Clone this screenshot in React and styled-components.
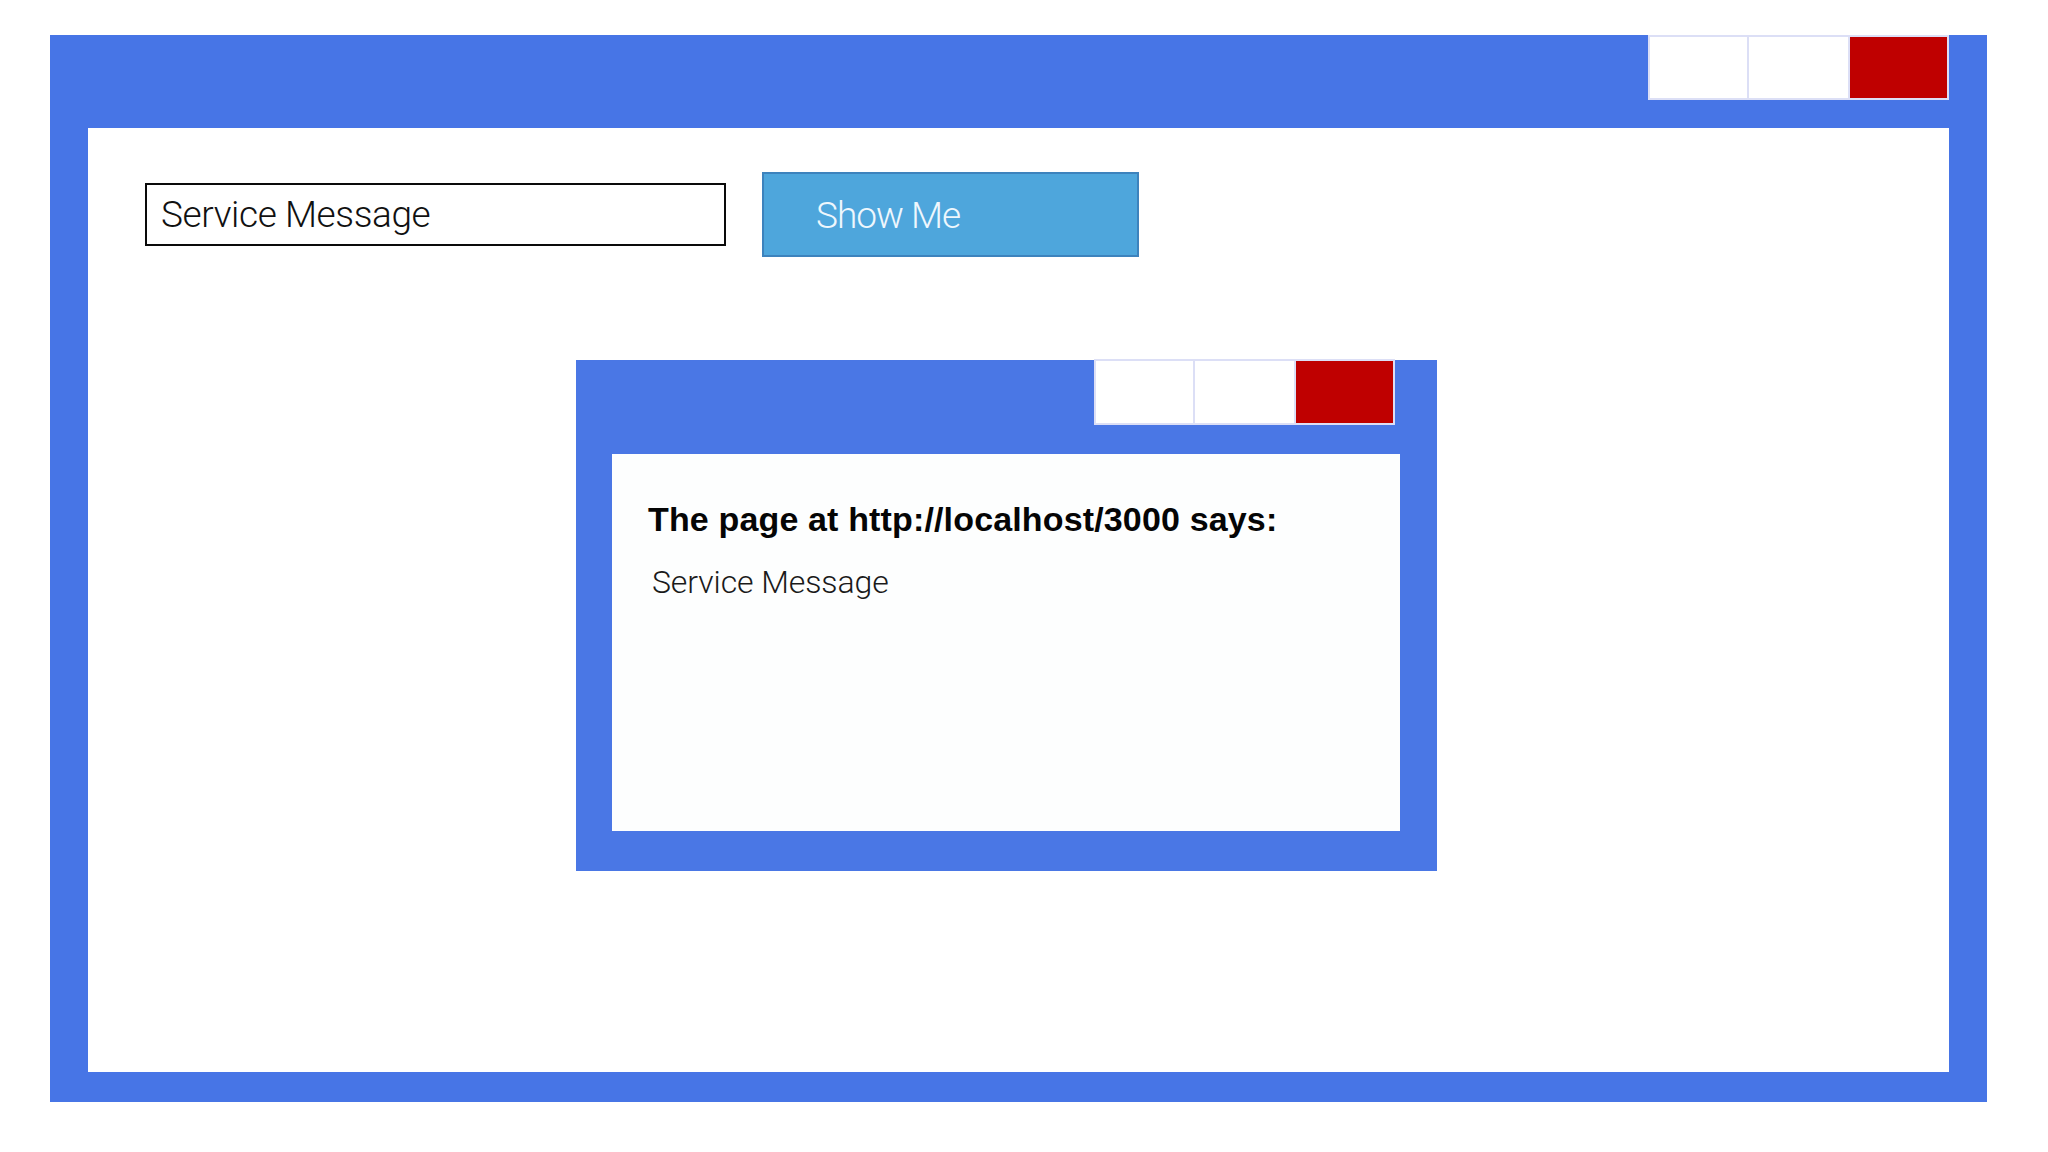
import React from "react";
import styled, { createGlobalStyle } from "styled-components";

const GlobalStyle = createGlobalStyle`
  html, body {
    margin: 0;
    padding: 0;
    background: #ffffff;
  }
  body {
    font-family: Roboto, "Liberation Sans", sans-serif;
  }
`;

const Page = styled.div`
  width: 2048px;
  height: 1152px;
  box-sizing: border-box;
  padding: 35px 61px 50px 50px;
  background: #ffffff;
`;

const Window = styled.div`
  display: flex;
  flex-direction: column;
  box-sizing: border-box;
  width: ${(p) => p.$width}px;
  height: ${(p) => p.$height}px;
  padding: 0 ${(p) => p.$side}px ${(p) => p.$bottom}px ${(p) => p.$left || p.$side}px;
  background: ${(p) => p.$color};
`;

const TitleBar = styled.div`
  display: flex;
  justify-content: flex-end;
  align-items: flex-start;
  flex: 0 0 ${(p) => p.$height}px;
  margin-right: ${(p) => p.$inset || 0}px;
`;

const Controls = styled.div`
  display: flex;
  margin-top: ${(p) => p.$offset || 0}px;
`;

const Control = styled.div`
  box-sizing: border-box;
  width: ${(p) => p.$w || 101}px;
  height: ${(p) => p.$h || 65}px;
  border: 2px solid #dcdff6;
  background: ${(p) => (p.$close ? "#bf0000" : "#ffffff")};
  & + & {
    margin-left: -2px;
  }
`;

const WindowBody = styled.div`
  flex: 1;
  background: ${(p) => p.$bg || "#ffffff"};
  box-sizing: border-box;
`;

const MainBody = styled(WindowBody)`
  padding: 44px 0 0 57px;
`;

const FormRow = styled.div`
  display: flex;
  align-items: center;
  gap: 36px;
`;

const TextField = styled.div`
  box-sizing: border-box;
  width: 581px;
  height: 63px;
  border: 2px solid #0a0a0a;
  display: flex;
  align-items: center;
  padding-left: 14px;
  font-family: Roboto, "Liberation Sans", sans-serif;
  font-weight: 300;
  font-size: 37px;
  letter-spacing: -0.4px;
  color: #111111;
`;

const ShowButton = styled.div`
  box-sizing: border-box;
  width: 377px;
  height: 85px;
  background: #4ea6dc;
  border: 2px solid #3d83bd;
  display: flex;
  align-items: center;
  padding-left: 52px;
  padding-top: 2px;
  font-family: Roboto, "Liberation Sans", sans-serif;
  font-weight: 300;
  font-size: 37px;
  letter-spacing: -1px;
  color: #eef7fd;
`;

const DialogArea = styled.div`
  margin: 103px 0 0 431px;
`;

const DialogBody = styled(WindowBody)`
  padding: 45px 0 0 36px;
`;

const DialogTitle = styled.div`
  font-family: "Liberation Sans", Arial, sans-serif;
  font-weight: 700;
  font-size: 34px;
  letter-spacing: 0.15px;
  color: #050505;
  line-height: 40px;
`;

const DialogMessage = styled.div`
  margin-top: 23px;
  padding-left: 4px;
  font-family: Roboto, "Liberation Sans", sans-serif;
  font-weight: 300;
  font-size: 32px;
  letter-spacing: -0.1px;
  color: #1a1a1a;
  line-height: 40px;
`;

function WindowControls({ offset, h }) {
  return (
    <Controls $offset={offset}>
      <Control $h={h} />
      <Control $h={h} $w={103} />
      <Control $h={h} $close />
    </Controls>
  );
}

export default function App() {
  return (
    <>
      <GlobalStyle />
      <Page>
        <Window $width={1937} $height={1067} $side={38} $bottom={30} $color="#4775e6">
          <TitleBar $height={93}>
            <WindowControls h={65} />
          </TitleBar>
          <MainBody>
            <FormRow>
              <TextField>Service Message</TextField>
              <ShowButton>Show Me</ShowButton>
            </FormRow>
            <DialogArea>
              <Window $width={861} $height={511} $side={37} $left={36} $bottom={40} $color="#4a77e5">
                <TitleBar $height={94} $inset={5}>
                  <WindowControls offset={-1} h={66} />
                </TitleBar>
                <DialogBody $bg="#fdfefe">
                  <DialogTitle>The page at http://localhost/3000 says:</DialogTitle>
                  <DialogMessage>Service Message</DialogMessage>
                </DialogBody>
              </Window>
            </DialogArea>
          </MainBody>
        </Window>
      </Page>
    </>
  );
}
